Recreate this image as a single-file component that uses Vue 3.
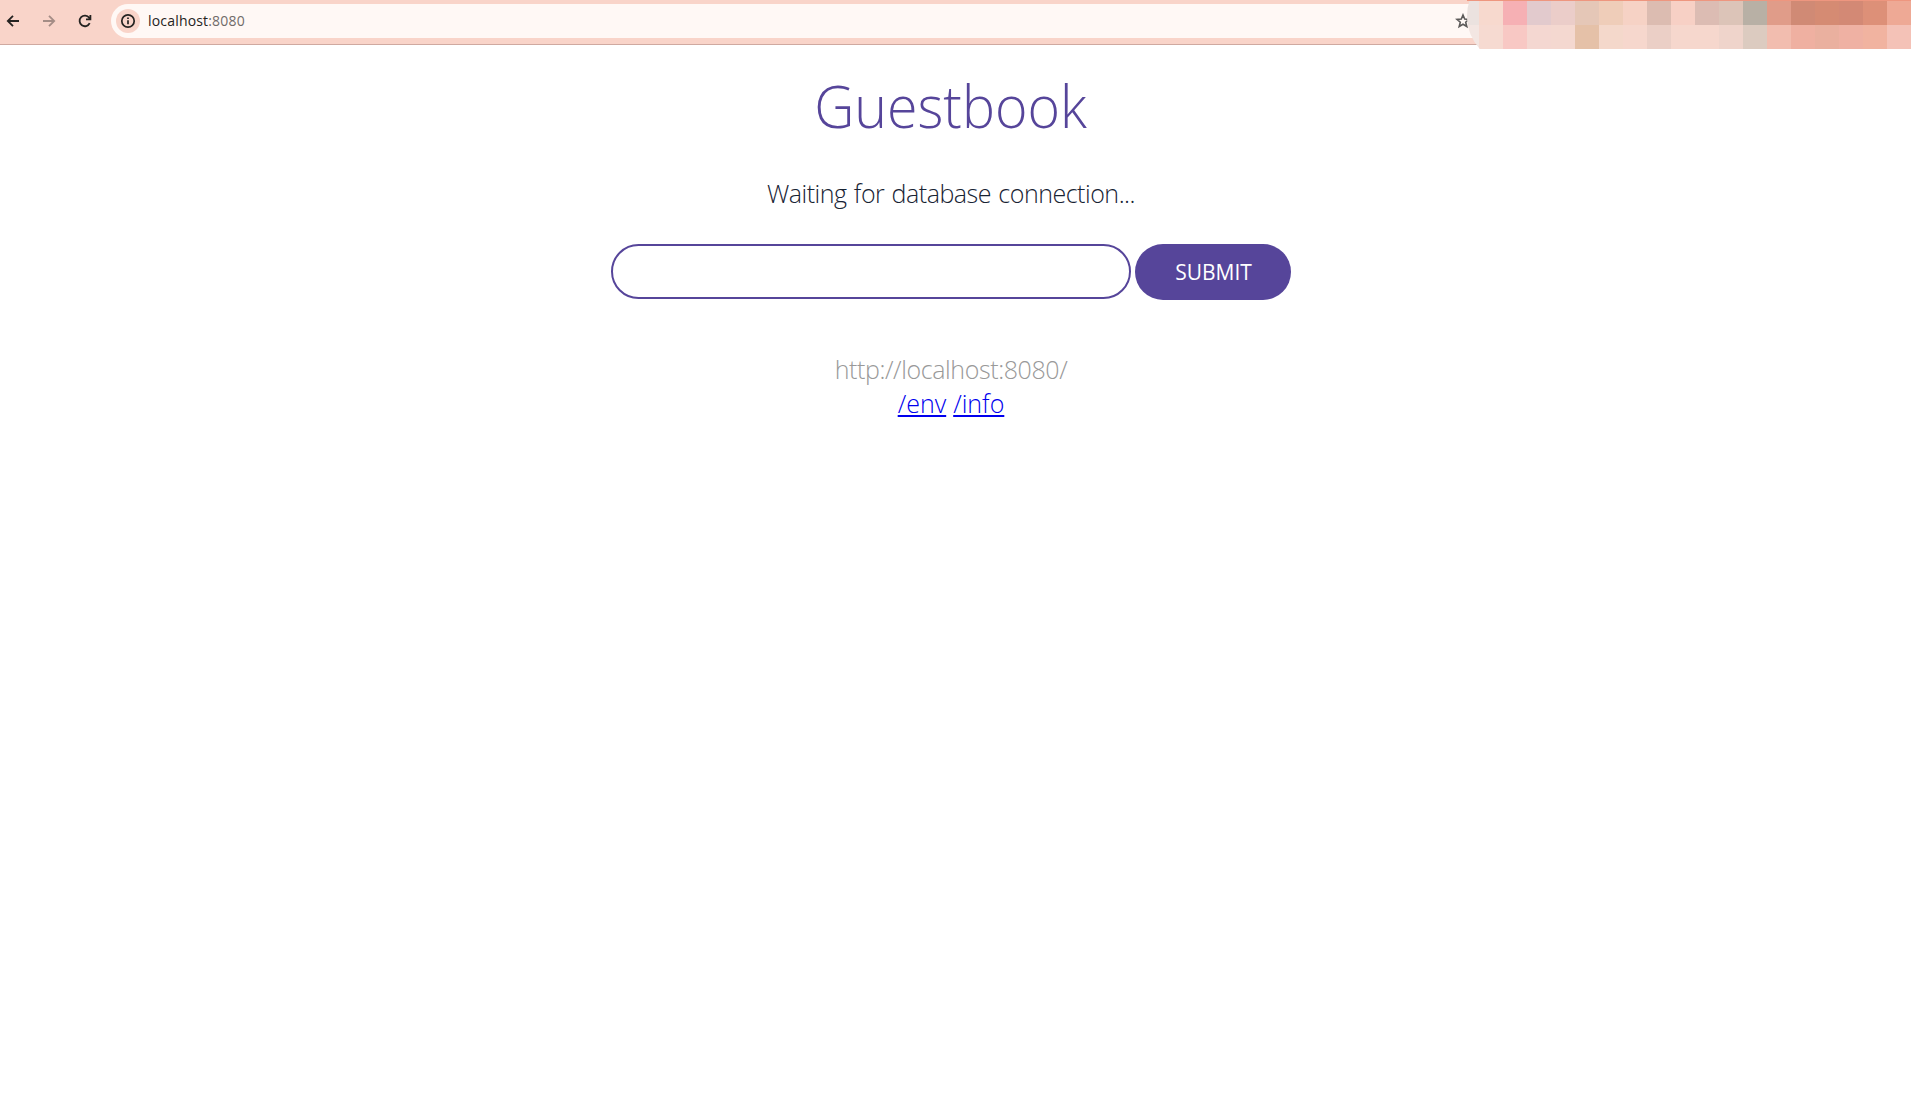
<script setup>
import { ref } from 'vue'

const entry = ref('')
const mosaic = [
  ['#f7d9ce', '#f6b0b4', '#e2cacd', '#ebcdc9', '#e5c7b7', '#efcdb9', '#f6d2c5', '#dcbcb1', '#f7d0c5', '#dcbcb3', '#dcc4b8', '#b8b0a5', '#e09c89', '#d08a75', '#d58b73', '#d38975', '#dd9078', '#eea995'],
  ['#f6dad1', '#f8c8c4', '#f4d7d1', '#f4d8d0', '#e5c1a8', '#f4d8cb', '#f6d7cd', '#ebcfc6', '#f6d7cd', '#f6d7cd', '#efd4cb', '#dccbc0', '#f2bdaf', '#efb0a1', '#eab09f', '#efb1a3', '#f1b3a0', '#f4c2b7'],
]
</script>

<template>
  <div class="window">
    <header class="toolbar">
      <nav class="controls">
        <svg class="icon" viewBox="0 0 16 16"><path d="M14 8H3M8 2.8 2.8 8 8 13.2" /></svg>
        <svg class="icon muted" viewBox="0 0 16 16"><path d="M2 8h11M8 2.8 13.2 8 8 13.2" /></svg>
        <svg class="icon" viewBox="0 0 16 16"><path d="M12.7 10.2A5.3 5.3 0 1 1 12.2 4.8L13.3 6M13.4 2v4.4H9" /></svg>
      </nav>
      <div class="address">
        <span class="site-info">
          <svg viewBox="0 0 16 16"><circle cx="8" cy="8" r="6.2" /><path d="M8 7.2v4M8 4.5v1.6" /></svg>
        </span>
        <span class="host">localhost<span class="port">:8080</span></span>
        <svg class="star" viewBox="0 0 16 16"><path d="M8 2 9.7 6.1 14 6.4 10.7 9.2 11.8 13.5 8 11.2 4.2 13.5 5.3 9.2 2 6.4 6.3 6.1Z" /></svg>
      </div>
      <div class="redacted">
        <div class="edge"></div>
        <div class="strip"></div>
        <div class="mosaic">
          <template v-for="(row, r) in mosaic" :key="r">
            <i v-for="(color, c) in row" :key="c" :style="{ background: color }"></i>
          </template>
        </div>
      </div>
    </header>

    <main>
      <h1>Guestbook</h1>
      <p class="status">Waiting for database connection...</p>
      <form @submit.prevent>
        <input v-model="entry" type="text" autocomplete="off" />
        <button type="submit">SUBMIT</button>
      </form>
      <div class="links">
        <p class="url">http://localhost:8080/</p>
        <p class="paths"><a href="#env">/env</a><a href="#info">/info</a></p>
      </div>
    </main>
  </div>
</template>

<style>
body { background: #fff; overflow: hidden; }
</style>

<style scoped>
.window { height: 1107px; overflow: hidden; font-family: "Open Sans", "Noto Sans", sans-serif; font-weight: 300; }
.toolbar { position: relative; box-sizing: border-box; height: 45px; padding: 4px 0 0 5px; display: flex; background: #f9d4c9; border-bottom: 1px solid #cfa9a0; }
.controls { display: flex; gap: 20px; padding-top: 9px; margin-right: 18px; }
.icon { width: 16px; height: 16px; fill: none; stroke: #252321; stroke-width: 1.8; }
.muted { stroke: #a58d86; }
.address { box-sizing: border-box; width: 1400px; height: 34px; border-radius: 17px; background: #fff8f5; display: flex; align-items: center; padding-left: 5px; }
.site-info { width: 24px; height: 24px; border-radius: 50%; background: #f9d4c9; display: flex; align-items: center; justify-content: center; }
.site-info svg { width: 16px; height: 16px; fill: none; stroke: #252321; stroke-width: 1.7; }
.host { width: 105px; font: 400 14px/20px "Open Sans", sans-serif; letter-spacing: 0.18px; color: #252321; margin-left: 8px; }
.port { color: #706b69; }
.star { width: 16px; height: 16px; margin-left: 1202px; fill: none; stroke: #5c5a59; stroke-width: 1.6; }
.redacted { position: absolute; top: 0; right: 0; width: 444px; height: 49px; overflow: hidden; }
.edge { position: absolute; left: 0; top: -33px; width: 98px; height: 98px; border-radius: 50%; background: linear-gradient(#ebe2df 58px, #f3e6e2 58px); }
.strip { position: relative; height: 1px; background: #ee967f; }
.mosaic { position: relative; margin-left: 12px; display: grid; grid-template-columns: repeat(18, 24px); grid-template-rows: 24px 24px; clip-path: path("M0 0H432V48H1L0 47Z"); }
main { display: flex; flex-direction: column; align-items: center; margin-right: 9px; }
h1, p { margin: 0; white-space: nowrap; }
h1 { margin-top: 19px; height: 82px; font-size: 59px; line-height: 82px; font-weight: 300; transform: translateX(-0.5px) scaleX(0.94); color: #56459a; }
.status { margin-top: 30px; height: 34px; font-size: 25px; line-height: 34px; letter-spacing: -0.48px; word-spacing: 1.3px; color: #182333; }
form { display: flex; align-items: flex-start; gap: 4px; margin-top: 34px; }
input { box-sizing: border-box; width: 520px; height: 55px; border: 2px solid #56459a; border-radius: 28px; padding: 0 24px; font: inherit; font-size: 22px; outline: none; background: #fff; }
button { width: 156px; height: 56px; border: 0; border-radius: 28px; padding: 1px 0 0 1px; background: #56459a; color: #fff; font: 400 21px/55px "Open Sans", sans-serif; }
.links { display: flex; flex-direction: column; align-items: center; margin-top: 52px; font-size: 25px; line-height: 34px; }
.url { letter-spacing: -0.4px; color: #999; }
.paths { display: flex; gap: 7px; }
.paths a { color: #00e; text-decoration: underline; text-decoration-thickness: 2px; text-underline-offset: 2px; }
</style>
